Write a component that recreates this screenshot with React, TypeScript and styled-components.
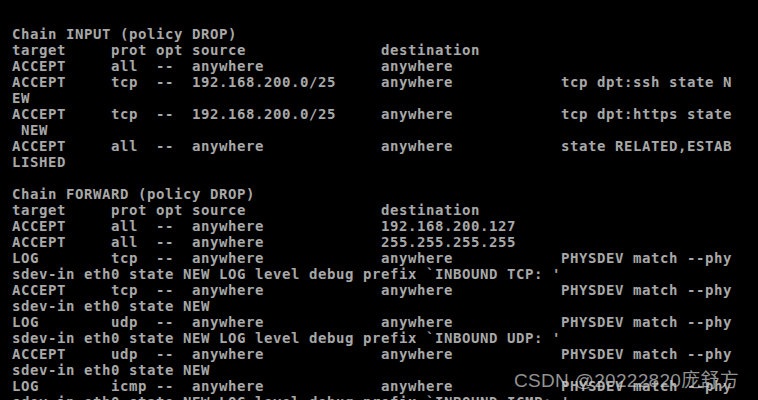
import React from 'react';
import styled, { createGlobalStyle } from 'styled-components';

const GlobalStyle = createGlobalStyle`
  html, body {
    margin: 0;
    padding: 0;
    background: #000;
  }
  body {
    width: 758px;
    height: 400px;
    overflow: hidden;
  }
`;

const lines: string[] = [
  'Chain INPUT (policy DROP)',
  'target     prot opt source               destination',
  'ACCEPT     all  --  anywhere             anywhere',
  'ACCEPT     tcp  --  192.168.200.0/25     anywhere            tcp dpt:ssh state N',
  'EW',
  'ACCEPT     tcp  --  192.168.200.0/25     anywhere            tcp dpt:https state',
  ' NEW',
  'ACCEPT     all  --  anywhere             anywhere            state RELATED,ESTAB',
  'LISHED',
  '',
  'Chain FORWARD (policy DROP)',
  'target     prot opt source               destination',
  'ACCEPT     all  --  anywhere             192.168.200.127',
  'ACCEPT     all  --  anywhere             255.255.255.255',
  'LOG        tcp  --  anywhere             anywhere            PHYSDEV match --phy',
  "sdev-in eth0 state NEW LOG level debug prefix `INBOUND TCP: '",
  'ACCEPT     tcp  --  anywhere             anywhere            PHYSDEV match --phy',
  'sdev-in eth0 state NEW',
  'LOG        udp  --  anywhere             anywhere            PHYSDEV match --phy',
  "sdev-in eth0 state NEW LOG level debug prefix `INBOUND UDP: '",
  'ACCEPT     udp  --  anywhere             anywhere            PHYSDEV match --phy',
  'sdev-in eth0 state NEW',
  'LOG        icmp --  anywhere             anywhere            PHYSDEV match --phy',
  "sdev-in eth0 state NEW LOG level debug prefix `INBOUND ICMP: '",
];

const App: React.FC = () => {
  return (
    <>
      <GlobalStyle />
      <Screen>
        <Console>
          {lines.map((line, i) => (
            <Line key={i}>{line || ' '}</Line>
          ))}
        </Console>
        <Watermark>CSDN @20222820庞舒方</Watermark>
      </Screen>
    </>
  );
};

export default App;

const Screen = styled.div`
  position: relative;
  width: 758px;
  height: 400px;
  background: #000;
  overflow: hidden;
`;

const Console = styled.div`
  display: flex;
  flex-direction: column;
  padding: 26px 0 0 12px;
  font-family: 'DejaVu Sans Mono', 'Liberation Mono', monospace;
  font-size: 14px;
  letter-spacing: 0.57px;
  font-weight: 700;
  color: #a8a8a8;
`;

const Line = styled.div`
  height: 16px;
  line-height: 16px;
  white-space: pre;
`;

const Watermark = styled.div`
  position: absolute;
  left: 514px;
  top: 368px;
  font-family: 'Liberation Sans', 'Noto Sans CJK SC', sans-serif;
  font-size: 19px;
  letter-spacing: 0.3px;
  line-height: 26px;
  color: rgba(205, 205, 205, 0.72);
  white-space: nowrap;
`;
